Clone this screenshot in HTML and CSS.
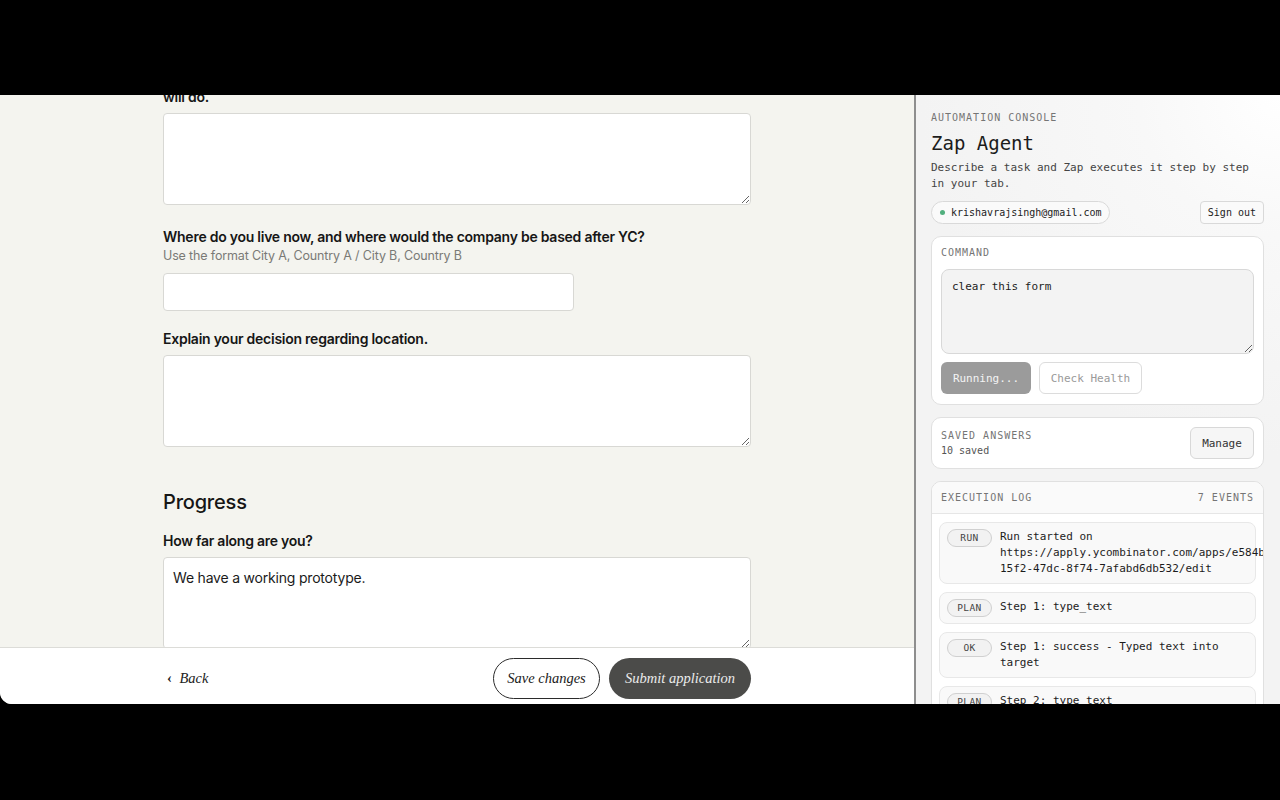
FILE: index.html
```html
<!DOCTYPE html>
<html lang="en">
  <head>
    <meta charset="UTF-8" />
    <meta name="viewport" content="width=device-width, initial-scale=1.0" />
    <title>Application - Zap Agent</title>
    <link rel="stylesheet" href="styles.css">
  </head>
  <body>
    <div class="screen">
      <main class="app">
        <div class="form-scroll">
          <form class="form">
            <div class="field">
              <label>Describe what your company does or is going to make, and what it<br />will do.</label>
              <textarea class="area"></textarea>
            </div>
            <div class="field field-short">
              <label>Where do you live now, and where would the company be based after YC?</label>
              <p class="hint">Use the format City A, Country A / City B, Country B</p>
              <input type="text" class="line" />
            </div>
            <div class="field">
              <label>Explain your decision regarding location.</label>
              <textarea class="area"></textarea>
            </div>
            <h2>Progress</h2>
            <div class="field">
              <label>How far along are you?</label>
              <textarea class="area">We have a working prototype.</textarea>
            </div>
          </form>
        </div>
        <div class="actions">
          <div class="actions-inner">
            <a href="#back" class="back"><span class="chev">&lsaquo;</span> Back</a>
            <button type="button" class="pill save">Save changes</button>
            <button type="button" class="pill submit">Submit application</button>
          </div>
        </div>
      </main>

      <aside class="console">
        <div class="eyebrow">AUTOMATION CONSOLE</div>
        <h1>Zap Agent</h1>
        <p class="desc">Describe a task and Zap executes it step by step in your tab.</p>
        <div class="account">
          <span class="email"><span class="dot"></span>krishavrajsingh@gmail.com</span>
          <button type="button" class="signout">Sign out</button>
        </div>

        <section class="card command">
          <div class="eyebrow">COMMAND</div>
          <textarea class="cmd">clear this form</textarea>
          <div class="cmd-buttons">
            <button type="button" class="btn running">Running...</button>
            <button type="button" class="btn health">Check Health</button>
          </div>
        </section>

        <section class="card saved">
          <div>
            <div class="eyebrow">SAVED ANSWERS</div>
            <div class="count">10 saved</div>
          </div>
          <button type="button" class="btn manage">Manage</button>
        </section>

        <section class="card log">
          <div class="log-head">
            <span class="eyebrow">EXECUTION LOG</span>
            <span class="eyebrow">7 EVENTS</span>
          </div>
          <div class="log-list">
            <div class="log-item">
              <span class="badge">RUN</span>
              <div class="log-text">Run started on<br /><span class="nowrap">https://apply.ycombinator.com/apps/e584bd1c-</span><br />15f2-47dc-8f74-7afabd6db532/edit</div>
            </div>
            <div class="log-item">
              <span class="badge">PLAN</span>
              <div class="log-text">Step 1: type_text</div>
            </div>
            <div class="log-item">
              <span class="badge">OK</span>
              <div class="log-text">Step 1: success - Typed text into target</div>
            </div>
            <div class="log-item">
              <span class="badge">PLAN</span>
              <div class="log-text">Step 2: type_text</div>
            </div>
          </div>
        </section>
      </aside>
    </div>
  </body>
</html>
```

FILE: styles.css
```css
body {
  margin: 0;
  background: #000;
  font-family: "Inter", "Liberation Sans", sans-serif;
  color: #161616;
}
.screen {
  margin-top: 95px;
  height: 609px;
  display: flex;
  overflow: hidden;
  border-bottom-left-radius: 12px;
}

/* left: application form */
.app {
  width: 914px;
  flex-shrink: 0;
  background: #f4f4ef;
  display: flex;
  flex-direction: column;
}
.form-scroll {
  flex: 1;
  overflow: hidden;
}
.form {
  width: 588px;
  margin: -28px 0 0 163px;
}
.field {
  margin-bottom: 22px;
}
.field-short {
  margin-bottom: 18px;
}
.field label {
  display: block;
  font-size: 14px;
  font-weight: 600;
  line-height: 20px;
  letter-spacing: -0.25px;
  margin-bottom: 6px;
}
.hint {
  margin: -6px 0 8px;
  font-size: 12.5px;
  line-height: 18px;
  letter-spacing: -0.15px;
  color: #7a7a76;
}
.area,
.line {
  display: block;
  box-sizing: border-box;
  background: #fff;
  border: 1px solid #d8d8d4;
  border-radius: 4px;
  font-family: inherit;
  font-size: 14px;
  line-height: 20px;
  letter-spacing: -0.2px;
  color: #1a1a1a;
}
.area {
  width: 100%;
  height: 92px;
  padding: 10px 9px;
}
.line {
  width: 411px;
  height: 38px;
}
.form h2 {
  font-size: 20px;
  font-weight: 500;
  line-height: 28px;
  letter-spacing: -0.2px;
  margin: 41px 0 15px;
}

.actions {
  height: 56px;
  background: #fff;
  border-top: 1px solid #dcdcd8;
}
.actions-inner {
  width: 588px;
  margin-left: 163px;
  padding-top: 10px;
  display: flex;
  align-items: center;
}
.back {
  margin-left: 4px;
  font-family: "Liberation Serif", serif;
  font-style: italic;
  font-size: 14.5px;
  color: #222;
  text-decoration: none;
}
.chev {
  font-style: normal;
  font-weight: 700;
  margin-right: 4px;
}
.pill {
  height: 41px;
  border-radius: 21px;
  font-family: "Liberation Serif", serif;
  font-style: italic;
  font-size: 14.5px;
}
.save {
  margin-left: auto;
  width: 107px;
  background: #fff;
  border: 1.5px solid #2b2b2b;
  color: #1a1a1a;
}
.submit {
  margin-left: 9px;
  width: 142px;
  background: #4b4b49;
  border: none;
  color: #ececec;
}

/* right: automation console */
.console {
  width: 366px;
  box-sizing: border-box;
  border-left: 2px solid #8e8e8e;
  padding: 16px 16px 0 15px;
  background: radial-gradient(circle at 100% 0, #fff 0, #f8f8f8 140px, #f3f3f3 360px);
  font-family: "DejaVu Sans Mono", "Liberation Mono", monospace;
  color: #1c1c1c;
}
.eyebrow {
  font-size: 10px;
  line-height: 14px;
  letter-spacing: 1px;
  color: #757575;
}
.console h1 {
  font-size: 19px;
  font-weight: 400;
  line-height: 24px;
  margin: 6px 0 5px;
}
.desc {
  font-size: 11px;
  line-height: 16px;
  color: #444;
  margin: 0 0 9px;
}
.account {
  display: flex;
  justify-content: space-between;
  align-items: center;
  margin-bottom: 12px;
}
.email {
  display: flex;
  align-items: center;
  gap: 6px;
  height: 23px;
  box-sizing: border-box;
  padding: 0 7px 0 8px;
  border: 1px solid #d9d9d9;
  border-radius: 12px;
  background: #fafafa;
  font-size: 10px;
  color: #222;
}
.dot {
  width: 5px;
  height: 5px;
  border-radius: 50%;
  background: #52b07f;
}
.signout {
  height: 23px;
  padding: 0 7px;
  border: 1px solid #d9d9d9;
  border-radius: 4px;
  background: #fafafa;
  font-family: inherit;
  font-size: 10px;
  color: #222;
}

.card {
  background: #fff;
  border: 1px solid #e0e0e0;
  border-radius: 10px;
  padding: 9px;
  margin-bottom: 12px;
}
.command {
  padding-bottom: 10px;
}
.cmd {
  display: block;
  box-sizing: border-box;
  width: 100%;
  height: 85px;
  margin: 9px 0 8px;
  padding: 10px;
  background: #f3f3f3;
  border: 1px solid #d8d8d8;
  border-radius: 8px;
  font-family: inherit;
  font-size: 11px;
  line-height: 14px;
  color: #1c1c1c;
}
.cmd-buttons {
  display: flex;
  gap: 8px;
}
.btn {
  height: 32px;
  border-radius: 6px;
  font-family: inherit;
  font-size: 11px;
}
.running {
  width: 90px;
  border: none;
  background: #9b9b9b;
  color: #f4f4f4;
}
.health {
  width: 103px;
  border: 1px solid #dcdcdc;
  background: #fff;
  color: #9a9a9a;
}
.saved {
  display: flex;
  justify-content: space-between;
  align-items: center;
}
.saved .eyebrow,
.count {
  line-height: 15px;
}
.count {
  font-size: 10px;
  color: #555;
}
.manage {
  width: 64px;
  border: 1px solid #d8d8d8;
  background: #f6f6f6;
  color: #333;
}

.log {
  padding: 0;
  overflow: hidden;
}
.log-head {
  height: 31px;
  padding: 0 9px;
  display: flex;
  justify-content: space-between;
  align-items: center;
  background: #fafafa;
  border-bottom: 1px solid #e6e6e6;
}
.log-list {
  padding: 8px 7px;
}
.log-item {
  display: flex;
  align-items: flex-start;
  gap: 8px;
  padding: 6px 8px 6px 7px;
  margin-bottom: 8px;
  background: #f9f9f9;
  border: 1px solid #e8e8e8;
  border-radius: 8px;
}
.badge {
  flex-shrink: 0;
  width: 45px;
  height: 18px;
  box-sizing: border-box;
  border: 1px solid #d0d0d0;
  border-radius: 9px;
  background: #f2f2f2;
  font-size: 9.5px;
  line-height: 16px;
  letter-spacing: 0.4px;
  text-align: center;
  color: #444;
}
.log-text {
  font-size: 11px;
  line-height: 16px;
  color: #1c1c1c;
}
.nowrap {
  white-space: nowrap;
}
```
